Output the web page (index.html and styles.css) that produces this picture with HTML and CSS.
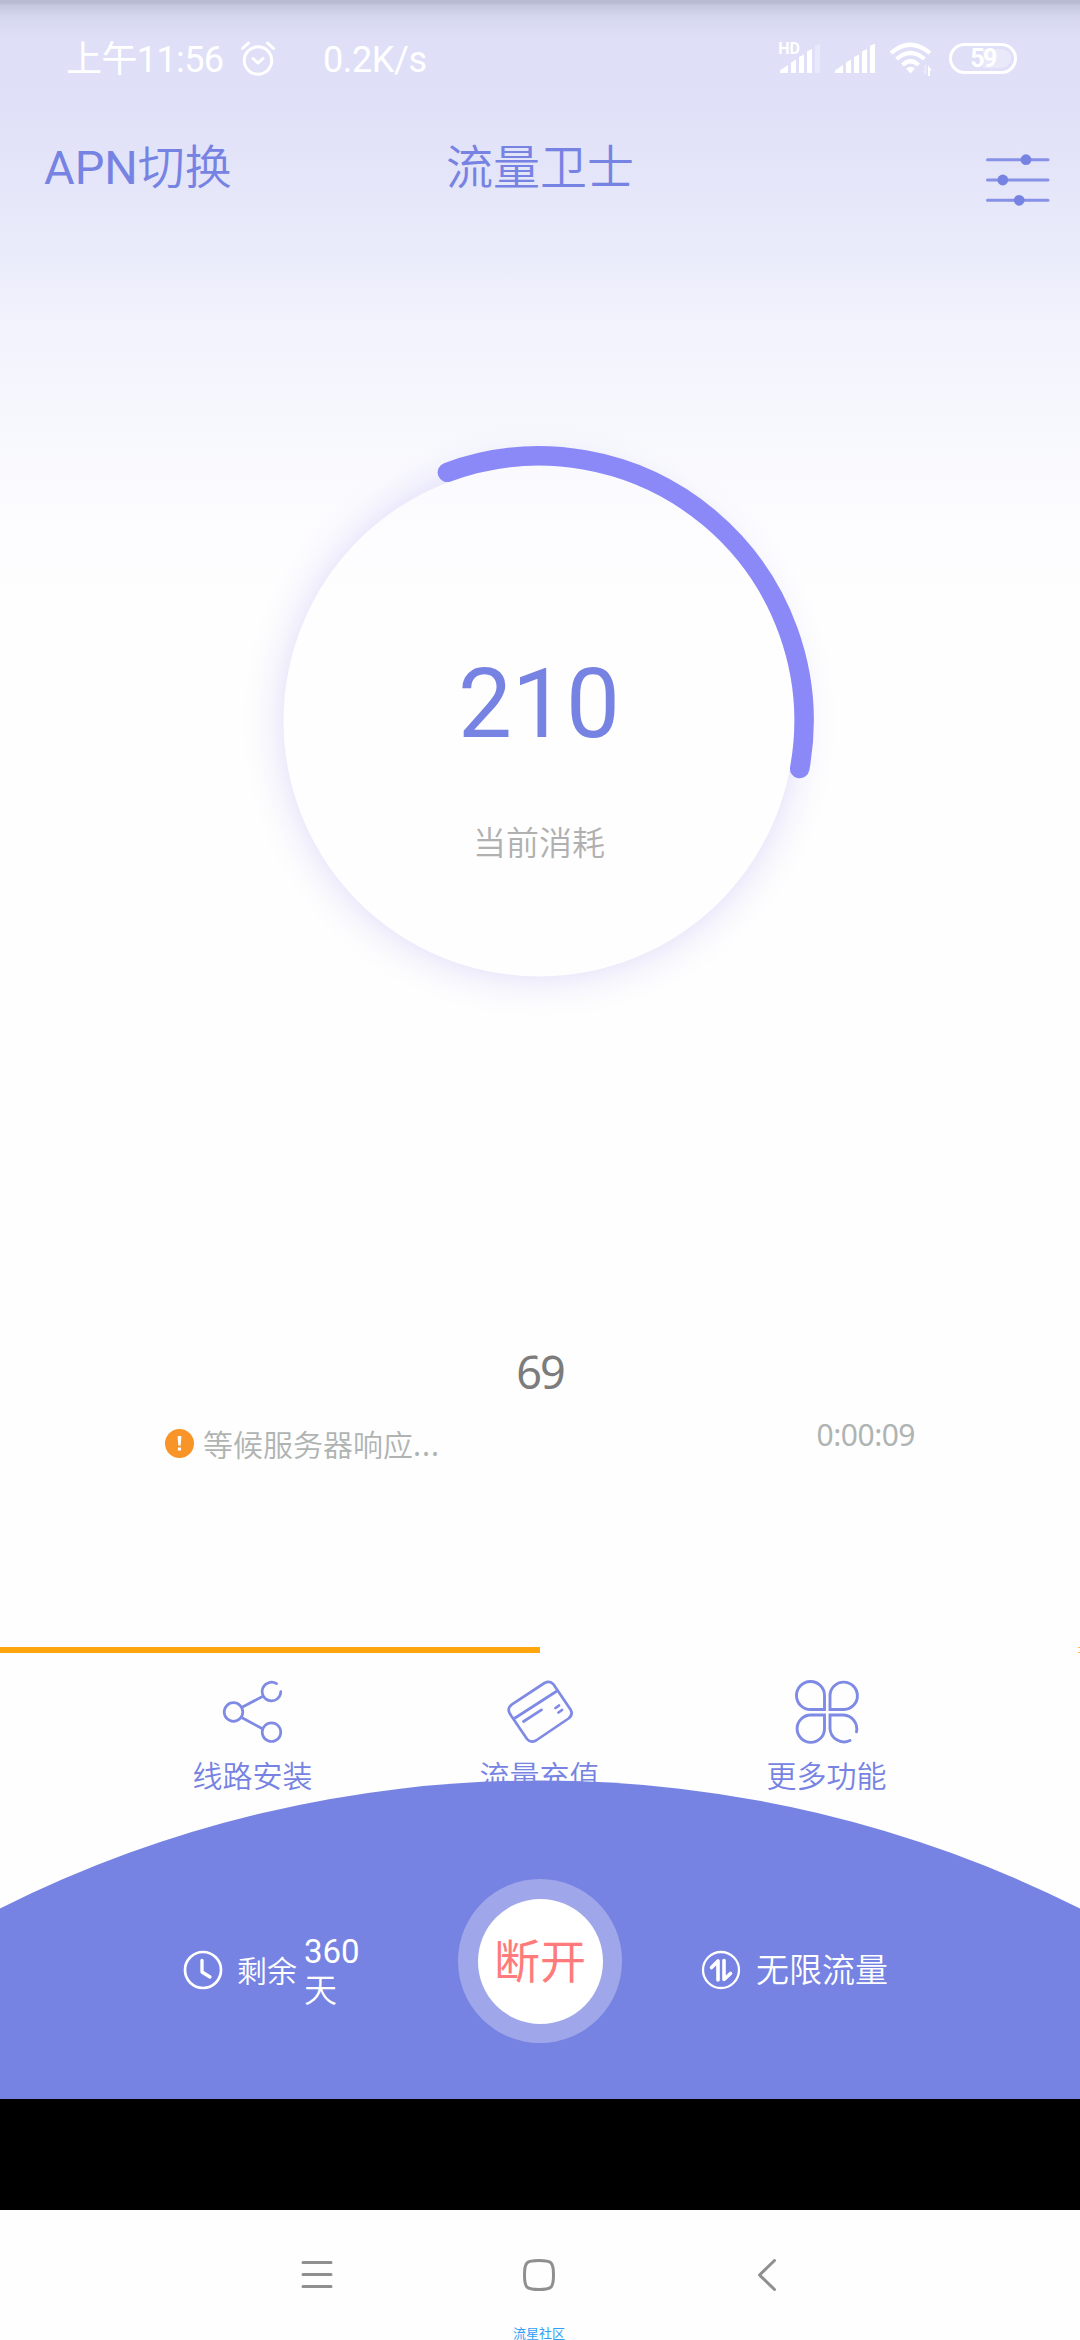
FILE: index.html
```html
<!DOCTYPE html>
<html lang="zh-CN">
<head>
<meta charset="utf-8">
<title>流量卫士</title>
<link rel="stylesheet" href="styles.css">
</head>
<body>
<div class="screen">
  <div class="statusbar">
    <div class="status-left">
      <span class="clock">上午11:56</span>
      <svg class="alarm" width="36" height="38" viewBox="0 0 36 38" fill="none" stroke="#fff" stroke-width="3" stroke-linecap="round" stroke-linejoin="round"><circle cx="18" cy="21.500" r="13.700"/><path d="M2.500 9.500 8.500 4M33.500 9.500 27.500 4M13 19.500l5 4.500 5-4.500"/></svg>
      <span class="speed">0.2K/s</span>
    </div>
    <div class="status-right">
      <svg width="42" height="34" viewBox="0 0 42 34" fill="#fff"><path d="M1 32V29.500L9 24V32zM12 32V21.500L17 18.500V32zM20 32V16L25 13.500V32zM28 32V10.500L33 8V32z"/><path opacity=".3" d="M36 32V5L41 2.500V32z"/><text class="hd" x="-0.800" y="13">HD</text></svg>
      <svg width="40" height="34" viewBox="0 0 40 34" fill="#fff"><path d="M0 32V29.500L8 24V32zM11 32V21.500L16 18.500V32zM19 32V16L24 13.500V32zM27 32V10.500L32 8V32zM35 32V5L40 2.500V32z"/></svg>
      <svg width="44" height="36" viewBox="0 0 44 36" fill="none" stroke="#fff" stroke-width="4.200"><path d="M2 13Q21-3.500 41 13M7.500 19Q21.500 7 35.500 19M13.500 25Q21.500 17.500 29.500 25"/><path fill="#fff" stroke="none" d="M17 28.500Q21.500 25 26 28.500L21.500 33.500z"/><path fill="#fff" stroke="none" d="M39 36V25.500L43 30.500H41V36z"/><path opacity=".35" fill="#fff" stroke="none" d="M37.500 25V35.500L33.500 31H35.500V25z"/></svg>
      <div class="battery"><span>59</span></div>
    </div>
  </div>

  <div class="titlebar">
    <div class="apn"><span class="latin">APN</span>切换</div>
    <div class="title">流量卫士</div>
    <svg class="settings" width="64" height="50" viewBox="0 0 64 50" stroke="#8791e6" stroke-width="3" stroke-linecap="round"><path d="M1.500 4.700H62M1.500 25H62M1.500 45.300H62"/><g fill="#7783e2" stroke="none"><circle cx="40" cy="4.700" r="5.400"/><circle cx="16.800" cy="25" r="5.400"/><circle cx="33.200" cy="45.300" r="5.400"/></g></svg>
  </div>

  <div class="gauge">
    <svg class="ring" width="600" height="600" viewBox="0 0 600 600" fill="none">
      <defs>
        <radialGradient id="halo" gradientUnits="userSpaceOnUse" cx="300" cy="300" r="298">
          <stop offset=".855" stop-color="#8476e6" stop-opacity=".14"/>
          <stop offset=".9" stop-color="#8476e6" stop-opacity=".065"/>
          <stop offset=".95" stop-color="#8476e6" stop-opacity=".02"/>
          <stop offset="1" stop-color="#8476e6" stop-opacity="0"/>
        </radialGradient>
      </defs>
      <path fill="url(#halo)" fill-rule="evenodd" d="M300 2a298 298 0 1 1 0 596a298 298 0 1 1 0-596zM300 44.500a255.500 255.500 0 1 0 0 511a255.500 255.500 0 1 0 0-511z"/>
      <path stroke="#8b89f8" stroke-width="19.500" stroke-linecap="round" d="M208.400 51.300A265 265 0 0 1 560.700 347.600"/>
    </svg>
    <div class="reading">
      <div class="value">210</div>
      <div class="caption">当前消耗</div>
    </div>
  </div>

  <div class="count">69</div>

  <div class="connection">
    <div class="waiting">
      <svg width="29" height="29" viewBox="0 0 29 29"><circle cx="14.500" cy="14.500" r="14.500" fill="#f89428"/><path fill="#fff" d="M12.600 7H16.400L15.700 16.500H13.300zM12.900 18.500H16.100V21.500H12.900z"/></svg>
      <span>等候服务器响应<span class="dots">...</span></span>
    </div>
    <div class="elapsed">0:00:09</div>
  </div>

  <div class="progress"><div class="progress-fill"></div><div class="progress-mark"></div></div>

  <div class="menu">
    <div class="item">
      <svg width="64" height="64" viewBox="0 0 64 64" fill="none" stroke="#7f8ae5" stroke-width="2.700" stroke-linecap="round"><circle cx="12.500" cy="32" r="9.300"/><circle cx="50.500" cy="52.200" r="9.300"/><path d="M55.500 3.700A9.300 9.300 0 1 0 59.800 11.500M21.500 27 41 16.700M21.500 38 41 48.500"/></svg>
      <span>线路安装</span>
    </div>
    <div class="item">
      <svg width="66" height="64" viewBox="0 0 66 64" fill="none" stroke="#7f8ae5" stroke-width="2.700" stroke-linecap="round" stroke-linejoin="round"><path d="M4.200 35.800 2.800 33.500Q-.2 28 5 24.300L37.500 3Q43 0 46.600 4.500L63.500 29.500Q66.500 34.500 61.500 38.500L29 60.500Q23.500 63.500 20 59zM6.500 39 50 11M16.500 41.500 34.500 29.800M48.500 28 52 25.500M51.500 32.500 55 30"/></svg>
      <span>流量充值</span>
    </div>
    <div class="item">
      <svg width="64" height="64" viewBox="0 0 64 64" fill="none" stroke="#7f8ae5" stroke-width="2.900" stroke-linecap="round"><path d="M29.500 29.500H16A14 14 0 1 1 29.500 15.500zM35 29.500V15.500A13.700 13.700 0 1 1 49 29.500zM29.500 35V49A13.700 13.700 0 1 1 15.800 35zM61.500 51.800A14 14 0 0 0 48.500 35H35V48.500A14 14 0 0 0 55 60.500"/></svg>
      <span>更多功能</span>
    </div>
  </div>

  <div class="dock">
    <svg class="dome" width="1080" height="319" viewBox="0 0 1080 319"><path fill="#7783e2" d="M0 128.500A1203 1203 0 0 1 1080 128.500V319H0z"/></svg>
    <div class="dock-row">
      <div class="remain">
        <svg width="40" height="40" viewBox="0 0 40 40" fill="none" stroke="#fff" stroke-width="2.700" stroke-linecap="round" stroke-linejoin="round"><circle cx="20" cy="20" r="18"/><path stroke-width="3.300" d="M19 10.500V22L27 27"/></svg>
        <span class="remain-label">剩余</span>
        <span class="remain-days"><span class="latin">360</span><br>天</span>
      </div>
      <div class="power"><div class="power-face">断开</div></div>
      <div class="unlimited">
        <svg width="40" height="40" viewBox="0 0 40 40" fill="none" stroke="#fff" stroke-width="2.300" stroke-linecap="round" stroke-linejoin="round"><circle cx="20" cy="20" r="18"/><path stroke-width="3.600" d="M10.500 17.500 17 11V30M23 10.500V29.500L29.500 23.500"/></svg>
        <span>无限流量</span>
      </div>
    </div>
  </div>

  <div class="black"></div>

  <div class="navbar">
    <svg width="32" height="34" viewBox="0 0 32 34" stroke="#8f8f8f" stroke-width="3" stroke-linecap="round"><path d="M2 4.500H30M2 16.500H30M2 28.500H30"/></svg>
    <div class="home">
      <svg width="34" height="34" viewBox="0 0 34 34" fill="none" stroke="#8f8f8f" stroke-width="3"><path d="M17 2.500C29.500 2.500 31.500 4 31.500 17S29.500 31.500 17 31.500 2.500 30 2.500 17 4.500 2.500 17 2.500z"/></svg>
      <span class="community">流星社区</span>
    </div>
    <svg width="20" height="34" viewBox="0 0 20 34" fill="none" stroke="#8f8f8f" stroke-width="3" stroke-linecap="round" stroke-linejoin="round"><path d="M17.500 2.500 2.500 17 17.500 31.500"/></svg>
  </div>
</div>
</body>
</html>
```
FILE: styles.css
```css
* { box-sizing: border-box; }

body {
  margin: 0;
  font-family: Roboto, "Noto Sans CJK SC", sans-serif;
}

svg { display: block; flex: none; overflow: visible; }

.screen {
  width: 1080px;
  height: 2340px;
  overflow: hidden;
  display: flex;
  flex-direction: column;
  white-space: nowrap;
  background:
    linear-gradient(to bottom, #b9bbd2 0, #b9bbd2 3px, #c5c7de 5px, rgba(211, 213, 236, .7) 18px, rgba(222, 224, 247, 0) 38px),
    linear-gradient(to bottom, #dedff7 0, #e0e1f8 110px, #e6e7f9 200px, #eaebfa 253px, #edeefb 280px, #f1f2fc 320px, #f4f4fd 360px, #f7f8fd 430px, #fafafe 470px, #fdfdff 540px, #fefefe 620px);
}

.screen > div { flex: none; }

.statusbar {
  height: 114px;
  padding: 35px 63px 0 66px;
  display: flex;
  justify-content: space-between;
  color: #fff;
}

.status-left, .status-right {
  display: flex;
  height: 46px;
  align-items: center;
}

.clock { font-size: 36px; line-height: 46px; letter-spacing: -.6px; width: 174px; margin-top: 3px; }
.alarm { margin-top: -1px; }
.speed { font-size: 36px; line-height: 46px; letter-spacing: -.4px; margin: 3px 0 0 47px; }

.status-right { gap: 14px; }
.hd { font: 700 16px Roboto, sans-serif; }

.battery {
  width: 68px;
  height: 31px;
  margin-left: 2px;
  border: 3px solid #fff;
  border-radius: 16px;
  padding: 3px;
}

.battery span {
  display: block;
  height: 19px;
  border-radius: 10px;
  background: linear-gradient(to right, transparent 50%, rgba(255, 255, 255, .3) 50%);
  font: 700 25px/20px Roboto, sans-serif;
  letter-spacing: -1.500px;
  text-align: center;
}

.titlebar {
  height: 227px;
  padding: 0 30px 0 44px;
  display: grid;
  grid-template-columns: 1fr 188px 1fr;
  color: #7783e2;
  font-size: 47px;
  font-weight: 350;
  line-height: 108px;
}

.latin { font-weight: 400; }
.title { margin-left: -7px; }
.settings { justify-self: end; margin-top: 41px; }

.gauge {
  height: 600px;
  margin-top: 80px;
  display: grid;
  justify-content: center;
  padding-right: 2px;
}

.ring, .reading { grid-area: 1 / 1; }

.reading {
  padding-top: 231px;
  text-align: center;
}

.value {
  font-size: 96px;
  line-height: 104px;
  color: #7783e2;
}

.caption {
  margin-top: 60px;
  font-size: 33px;
  font-weight: 350;
  line-height: 56px;
  color: #b0b0b0;
}

.count {
  margin-top: 321px;
  height: 60px;
  font: 400 45px/60px "Noto Sans", sans-serif;
  letter-spacing: -2px;
  text-align: center;
  color: #7c7c7c;
}

.connection {
  height: 245px;
  padding: 15px 165px 0;
  display: flex;
  justify-content: space-between;
  color: #afb4b3;
}

.waiting {
  display: flex;
  align-items: center;
  gap: 9px;
  height: 52px;
  font-size: 30px;
  font-weight: 350;
}

.dots { font-family: "Noto Sans", sans-serif; font-weight: 400; letter-spacing: 1px; }

.elapsed { font: 400 30px/36px "Noto Sans", sans-serif; letter-spacing: -.5px; }

.progress {
  height: 6px;
  display: flex;
  justify-content: space-between;
}

.progress-fill { width: 50%; background: #ffa60f; }
.progress-mark { width: 2px; border: solid #ffb84a; border-width: 1px 0; }

.menu {
  height: 127px;
  padding: 27px 110px 0 109px;
  display: grid;
  grid-template-columns: 287px 287px 287px;
  color: #7783e2;
}

.item {
  display: flex;
  flex-direction: column;
  align-items: center;
  font-size: 30px;
  font-weight: 350;
  line-height: 42px;
  gap: 12px;
}

.dock {
  height: 319px;
  display: grid;
  position: relative;
}

.dome, .dock-row { grid-area: 1 / 1; }

.dock-row {
  display: grid;
  grid-template-columns: 458px 164px 458px;
  padding-top: 99px;
  color: #fff;
  font-weight: 350;
}

.remain {
  display: flex;
  align-items: center;
  height: 181px;
  padding-left: 183px;
}

.remain-label { font-size: 30px; margin: 0 7px 2px 14px; }
.remain-days { font-size: 33px; line-height: 39px; padding-top: 3px; }

.power {
  width: 164px;
  height: 164px;
  border-radius: 50%;
  background: #9fa7ea;
  display: grid;
  place-items: center;
}

.power-face {
  width: 125px;
  height: 125px;
  border-radius: 50%;
  background: #fff;
  color: #ff7b7b;
  font-size: 46px;
  font-weight: 400;
  line-height: 126px;
  text-align: center;
}

.unlimited {
  display: flex;
  align-items: center;
  height: 181px;
  padding-left: 79px;
  gap: 15px;
  font-size: 33px;
}

.unlimited span { margin-bottom: 4px; }

.black { height: 111px; background: #000; }

.navbar {
  height: 130px;
  padding: 48px 303px 0 301px;
  display: flex;
  justify-content: space-between;
  background: #fefefe;
}

.home {
  display: flex;
  flex-direction: column;
  align-items: center;
  width: 60px;
  margin-left: -12px;
}

.community {
  margin-top: 35px;
  font-size: 13px;
  line-height: 14px;
  color: #2fa0f5;
}
```
